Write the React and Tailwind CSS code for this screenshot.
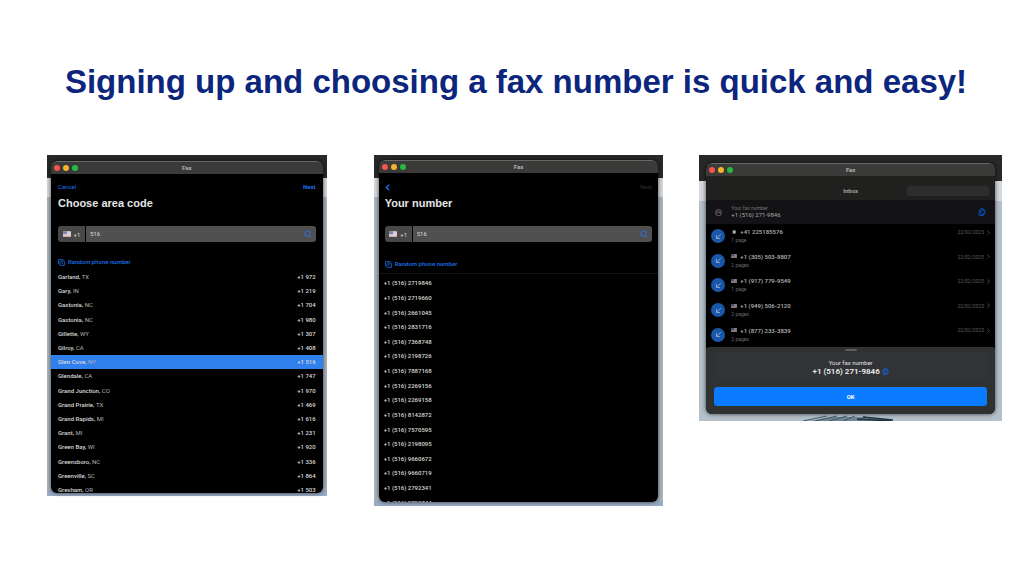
import React from "react";

const areaCodes = [
  ["Garland", "TX", "972"],
  ["Gary", "IN", "219"],
  ["Gastonia", "NC", "704"],
  ["Gastonia", "NC", "980"],
  ["Gillette", "WY", "307"],
  ["Gilroy", "CA", "408"],
  ["Glen Cove", "NY", "516"],
  ["Glendale", "CA", "747"],
  ["Grand Junction", "CO", "970"],
  ["Grand Prairie", "TX", "469"],
  ["Grand Rapids", "MI", "616"],
  ["Grant", "MI", "231"],
  ["Green Bay", "WI", "920"],
  ["Greensboro", "NC", "336"],
  ["Greenville", "SC", "864"],
  ["Gresham", "OR", "503"],
];

const numbers = [
  "2719846",
  "2719660",
  "2661045",
  "2831716",
  "7368748",
  "2198726",
  "7887168",
  "2269156",
  "2269158",
  "8142872",
  "7570595",
  "2198095",
  "9660672",
  "9660719",
  "2792341",
  "2792344",
];

const faxes = [
  { number: "+41 225185576", pages: "1 page", swiss: true },
  { number: "+1 (305) 503-8807", pages: "2 pages" },
  { number: "+1 (917) 779-9549", pages: "1 page" },
  { number: "+1 (949) 506-2120", pages: "2 pages" },
  { number: "+1 (877) 233-3839", pages: "2 pages" },
];

const UsFlag = ({ className }) => (
  <svg viewBox="0 0 16 11" className={className} aria-hidden="true">
    <rect width="16" height="11" rx="1" fill="#e8e4e6" />
    <path d="M0 8h16M0 10.5h16M8 2h8M8 5h8" stroke="#d99a9c" strokeWidth="1" />
    <rect width="8" height="6" fill="#7486b5" />
  </svg>
);

const SwissFlag = ({ className }) => (
  <svg viewBox="0 0 16 12" className={className} aria-hidden="true">
    <rect x="3" width="11" height="12" fill="#4d4a4b" />
    <path d="M8.5 2v8M4.5 6h8" stroke="#d6d6d6" strokeWidth="3" />
  </svg>
);

const SearchIcon = () => (
  <svg viewBox="0 0 16 16" className="size-2 text-[#2f74e0]" fill="none" stroke="currentColor" strokeWidth="2" aria-hidden="true">
    <circle cx="7" cy="7" r="5.4" />
    <path d="M11 11l4.4 4" />
  </svg>
);

const ShuffleIcon = () => (
  <svg viewBox="0 0 16 16" className="size-[7px]" fill="none" stroke="currentColor" strokeWidth="1.8" aria-hidden="true">
    <path d="M4 11.5H2.5A1.5 1.5 0 0 1 1 10V2.5A1.5 1.5 0 0 1 2.5 1H10a1.5 1.5 0 0 1 1.5 1.5V4" />
    <rect x="4.5" y="4.5" width="10.5" height="10.5" rx="1.5" />
    <path d="M7 7l5.5 5.5" />
  </svg>
);

const CopyIcon = ({ className }) => (
  <svg viewBox="0 0 16 16" className={className} fill="none" stroke="currentColor" strokeWidth="2" aria-hidden="true">
    <path d="M5 4H3a1 1 0 0 0-1 1v9a1 1 0 0 0 1 1h7a1 1 0 0 0 1-1v-2" />
    <path d="M5.5 12V2a1 1 0 0 1 1-1H10l4 4v6a1 1 0 0 1-1 1z" />
    <path d="M9.5 1v4.5H14" />
  </svg>
);

const FaxIcon = () => (
  <svg viewBox="0 0 16 16" className="size-[7px] text-[#6b6b6b]" fill="none" stroke="currentColor" strokeWidth="1.6" aria-hidden="true">
    <path d="M4 5V1.5h8V5M4 11.5H2a1 1 0 0 1-1-1V6a1 1 0 0 1 1-1h12a1 1 0 0 1 1 1v4.5a1 1 0 0 1-1 1h-2" />
    <rect x="4" y="8.5" width="8" height="6" />
  </svg>
);

const Window = ({ children, className }) => (
  <section className={`flex flex-col overflow-hidden rounded-md shadow-[0_0_4px_#000000aa] ${className}`}>
    <header className="flex h-[13px] shrink-0 items-center rounded-t-md border-t border-[#686868] bg-[#3a3a39] px-[3px]">
      <div className="flex flex-1 gap-[3px]">
        <span className="size-[6px] rounded-full bg-[#f4554f]" />
        <span className="size-[6px] rounded-full bg-[#f5b32c]" />
        <span className="size-[6px] rounded-full bg-[#27b940]" />
      </div>
      <span className="text-[6px] leading-[8px] font-bold text-[#b4b4b4]">Fax</span>
      <div className="flex-1" />
    </header>
    {children}
  </section>
);

// strip of desktop that shows around each window
const Desktop = ({ children, className }) => (
  <div className={`bg-[linear-gradient(#262829_0_23px,#d5d9dd_23px_42px,#a9b5bd_42px_calc(100%-6px),#9aabc6_calc(100%-6px))] ${className}`}>
    {children}
  </div>
);

const Heading = ({ children, className }) => (
  <h2 className={`pt-[5px] font-['Liberation_Sans',sans-serif] text-[11px] leading-[14px] font-bold text-[#e6e6e6] ${className}`}>
    {children}
  </h2>
);

const NumberSearch = ({ className }) => (
  <div className={`flex gap-px ${className}`}>
    <button type="button" className="flex h-4 w-[27px] items-center justify-center gap-[3px] rounded-l-[3px] bg-[#484848] text-[6px] text-[#d8d8d8]">
      <UsFlag className="h-[6px] w-2" />
      +1
    </button>
    <div className="flex h-4 min-w-0 flex-1 items-center rounded-r-[3px] bg-[#505050] px-1">
      <input
        aria-label="Area code"
        defaultValue="516"
        className="min-w-0 flex-1 bg-transparent text-[6px] leading-[8px] text-[#dedede] outline-none"
      />
      <SearchIcon />
    </div>
  </div>
);

const RandomButton = ({ className }) => (
  <button type="button" className={`flex items-center gap-[3px] text-[6px] leading-[8px] font-medium text-[#1b70e8] ${className}`}>
    <ShuffleIcon />
    Random phone number
  </button>
);

const AreaCodeWindow = () => (
  <Window className="h-[332px] bg-black">
    <div className="flex justify-between px-[7px] pt-[9px] text-[6px] leading-[8px] text-[#1b70e8]">
      <button type="button">Cancel</button>
      <button type="button" className="font-bold">Next</button>
    </div>
    <Heading className="px-[7px]">Choose area code</Heading>
    <NumberSearch className="mx-[7px] mt-4" />
    <RandomButton className="mx-[7px] mt-4" />
    <ul className="mt-1 -mb-1 flex min-h-0 flex-1 flex-col text-[6px] leading-[8px] font-medium text-[#d8d8d8]">
      {areaCodes.map(([city, state, code]) => (
        <li
          key={code}
          className={`flex flex-1 items-center justify-between px-[7px] ${code === "516" ? "bg-[#2f80ed]" : ""}`}
        >
          <span>
            {city}, <span className="font-normal text-[#b4b4b4]">{state}</span>
          </span>
          <span>+1 {code}</span>
        </li>
      ))}
    </ul>
  </Window>
);

const YourNumberWindow = () => (
  <Window className="h-[342px] bg-black">
    <div className="flex items-center justify-between px-[6px] pt-[10px] text-[6px] leading-[8px]">
      <button type="button" aria-label="Back" className="text-[#1b78f8]">
        <svg viewBox="0 0 8 12" className="h-[7px] w-[5px]" fill="none" stroke="currentColor" strokeWidth="2.2">
          <path d="M7 1L2 6l5 5" />
        </svg>
      </button>
      <button type="button" disabled className="text-[#2d2d2d]">Next</button>
    </div>
    <Heading className="px-[6px]">Your number</Heading>
    <NumberSearch className="mx-[6px] mt-4" />
    <RandomButton className="mx-[6px] mt-[18px]" />
    <ul className="mt-[5px] -mb-2 flex min-h-0 flex-1 flex-col border-t border-[#151515] pt-[2px] text-[6px] leading-[8px] font-medium text-[#d8d8d8]">
      {numbers.map((number) => (
        <li key={number} className="flex flex-1 items-center px-[5px]">+1 (516) {number}</li>
      ))}
    </ul>
  </Window>
);

const InboxWindow = () => (
  <Window className="h-[251px] bg-black">
    <div className="grid h-6 shrink-0 grid-cols-3 items-center bg-[#20201f] px-[6px] pt-[6px]">
      <h2 className="col-start-2 text-center text-[6px] leading-[8px] font-semibold text-[#a8a8a8]">Inbox</h2>
      <input aria-label="Search" className="h-[10px] w-[82px] justify-self-end rounded-[2px] bg-[#2d2d2d]" />
    </div>
    <div className="flex h-6 shrink-0 items-center bg-[#131214] px-[9px]">
      <FaxIcon />
      <div className="ml-[9px] flex-1">
        <p className="text-[5px] leading-[6px] text-[#737373]">Your fax number</p>
        <p className="text-[6px] leading-[8px] text-[#a8a8a8]">+1 (516) 271-9846</p>
      </div>
      <button type="button" aria-label="Copy fax number">
        <CopyIcon className="size-2 text-[#0a51b5]" />
      </button>
    </div>
    <ul className="flex min-h-0 flex-1 flex-col">
      {faxes.map((fax) => (
        <li key={fax.number} className="flex flex-1 items-center px-[5px]">
          <span className="flex size-[14px] items-center justify-center rounded-full bg-[#1957a8]">
            <svg viewBox="0 0 12 12" className="size-[7px]" fill="none" stroke="#a8bbdc" strokeWidth="1.3" aria-hidden="true">
              <path d="M10 2L3 9M2.5 3.5v6h6" />
            </svg>
          </span>
          <div className="ml-[6px] flex-1">
            <p className="flex items-center gap-[3px] text-[6px] leading-[9px] font-semibold text-[#a8a8a8]">
              {fax.swiss ? <SwissFlag className="h-1 w-[6px]" /> : <UsFlag className="h-1 w-[6px] opacity-60" />}
              {fax.number}
            </p>
            <p className="text-[5px] leading-[9px] text-[#6b6b6b]">{fax.pages}</p>
          </div>
          <div className="flex items-center gap-[3px] self-start pt-1 text-[5px] leading-[8px] text-[#5c5c5c]">
            22/02/2025
            <svg viewBox="0 0 6 10" className="h-[5px] w-[3px]" fill="none" stroke="currentColor" strokeWidth="1.5" aria-hidden="true">
              <path d="M1 1l4 4-4 4" />
            </svg>
          </div>
        </li>
      ))}
    </ul>
    <footer className="shrink-0 rounded-t-[3px] bg-[#303231] px-2 pt-[2px] pb-2">
      <div className="mx-auto h-[2px] w-3 rounded-full bg-[#5c5e60]" />
      <div className="mt-px flex h-[30px] flex-col items-center justify-center rounded-[3px] bg-[#313337]">
        <p className="text-[6px] leading-[9px] text-[#e0e0e0]">Your fax number</p>
        <p className="flex items-center gap-[2px] text-[8px] leading-[10px] font-semibold text-[#f0f0f0]">
          +1 (516) 271-9846
          <CopyIcon className="size-[7px] text-[#1764d0]" />
        </p>
      </div>
      <button type="button" className="mt-1 h-[19px] w-full rounded-[3px] bg-[#0a7aff] text-[6px] font-bold text-white">
        OK
      </button>
    </footer>
  </Window>
);

export default function App() {
  return (
    <main className="min-h-screen overflow-hidden bg-white font-[Roboto,sans-serif]">
      <h1 className="pt-[61px] pl-2 text-center font-['Liberation_Sans',sans-serif] text-[33px] leading-[42px] font-bold text-[#0b267c]">
        Signing up and choosing a fax number is quick and easy!
      </h1>
      <div className="mt-[52px] grid grid-cols-[291fr_290fr_303fr] items-start gap-x-9 pr-[22px] pl-[47px]">
        <Desktop className="mr-[11px] px-1 pt-[6px] pb-[3px]">
          <AreaCodeWindow />
        </Desktop>
        <Desktop className="px-[5px] pt-[5px] pb-1">
          <YourNumberWindow />
        </Desktop>
        <div className="bg-[linear-gradient(#262829_0_26px,#d5d9dd_26px_46px,#b4c0ca_46px)] px-[7px] pt-2">
          <InboxWindow />
          <svg viewBox="0 0 100 7" className="mx-auto h-[7px] w-[100px]" fill="none" aria-hidden="true">
            <path d="M8 7l22-4h34l22 4z" fill="#6f8794" />
            <path d="M2 7l24-5M14 7l22-5M28 7l18-5M42 7l12-5M58 7l6-5" stroke="#3f5663" />
            <path d="M56 5l34 2M62 3l30 3" stroke="#20333f" strokeWidth="1.5" />
          </svg>
        </div>
      </div>
    </main>
  );
}
